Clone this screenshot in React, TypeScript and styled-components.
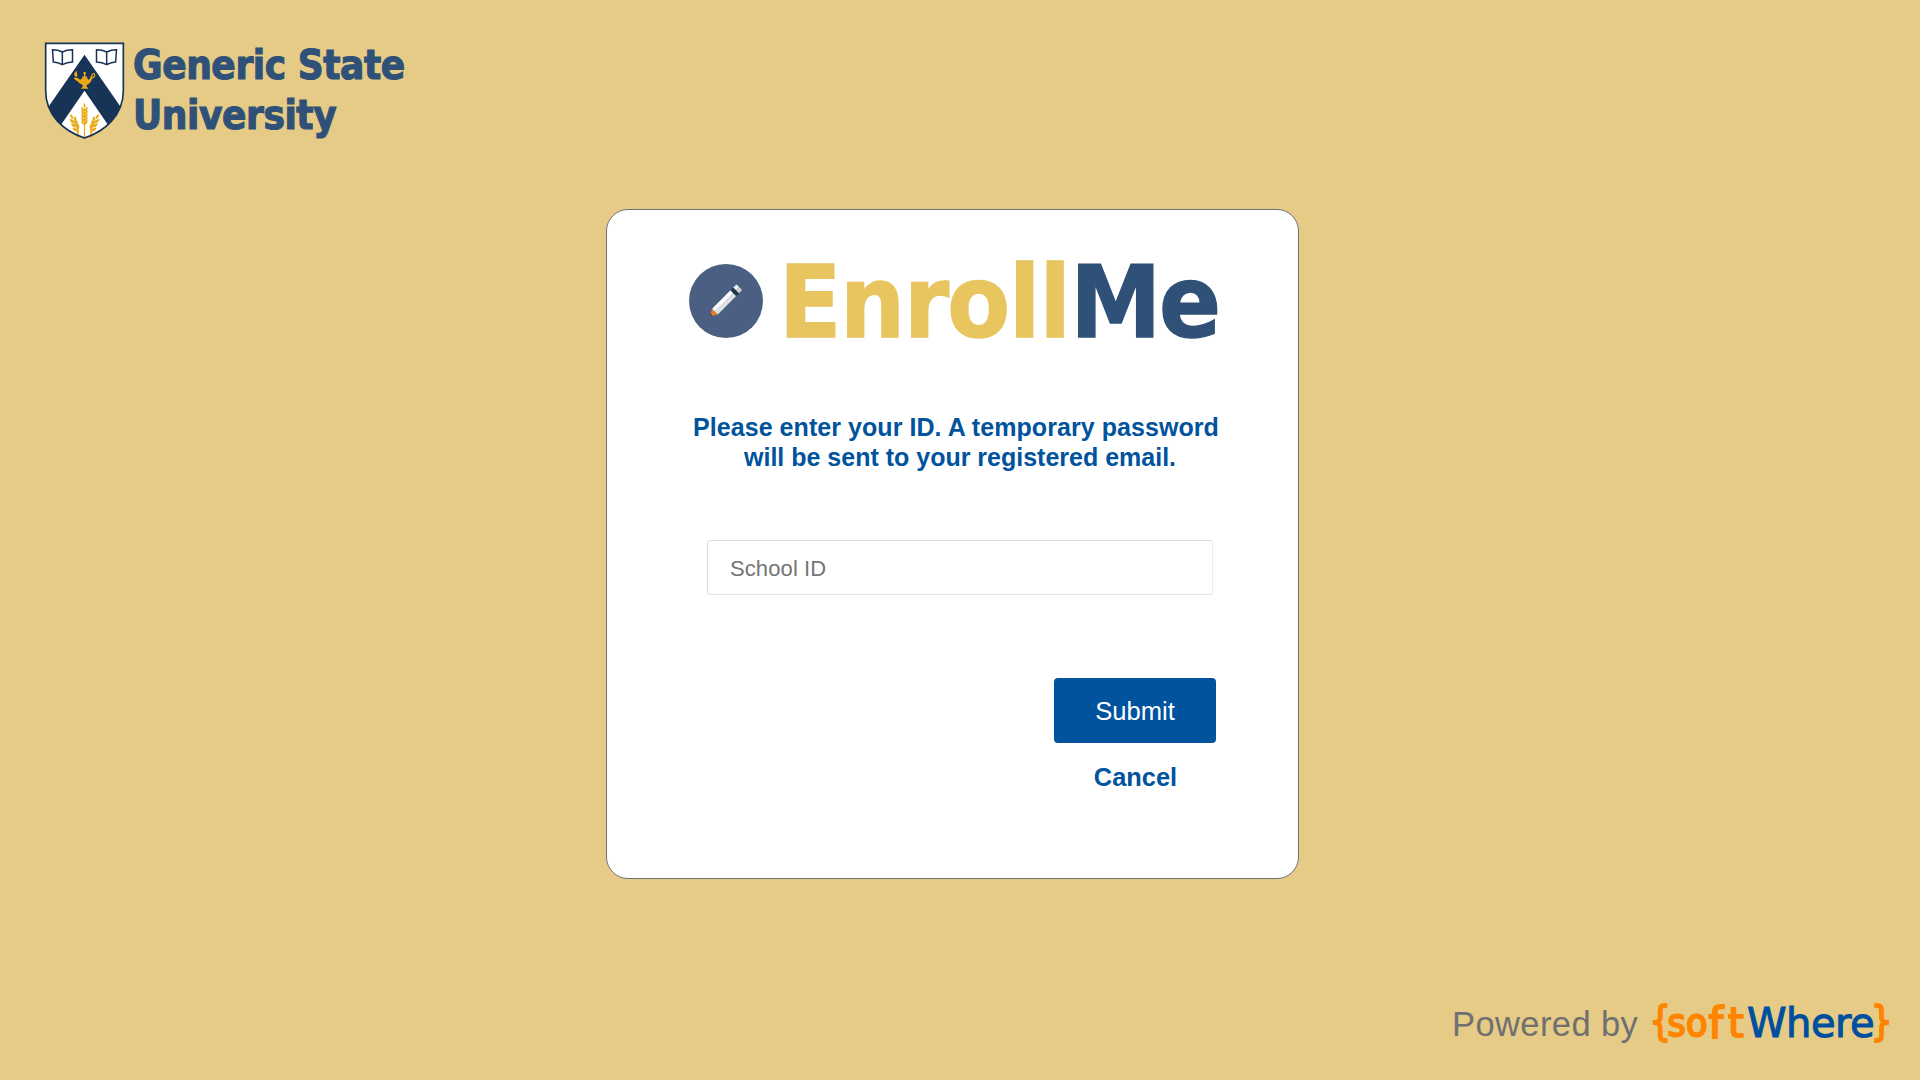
import React from "react";
import styled, { createGlobalStyle } from "styled-components";

const GlobalStyle = createGlobalStyle`
  * { box-sizing: border-box; }
  body { margin: 0; background: #e5cb86; }
`;

const sans = `"Liberation Sans", Arial, sans-serif`;
const brand = `"DejaVu Sans", Verdana, sans-serif`;

const Page = styled.div`
  width: 1920px;
  height: 1080px;
  display: flex;
  flex-direction: column;
  background: #e5cb86;
  font-family: ${sans};
  overflow: hidden;
`;

const Header = styled.header`
  display: flex;
  align-items: flex-start;
  height: 209px;
  padding: 30px 0 0 30px;
`;

const Crest = styled.svg`
  width: 103px;
  height: 120px;
  flex: none;
`;

const UniversityName = styled.h1`
  margin: 10px 0 0;
  font: bold 40px/50px ${brand};
  font-stretch: condensed;
  letter-spacing: -0.4px;
  -webkit-text-stroke: 1.1px #2f5178;
  color: #2f5178;
  white-space: nowrap;
`;

const Card = styled.main`
  width: 693px;
  height: 670px;
  margin-left: 606px;
  display: flex;
  flex-direction: column;
  background: #fff;
  border: 1px solid #707276;
  border-radius: 22px;
`;

const AppBrand = styled.div`
  display: flex;
  align-items: flex-start;
  height: 202px;
  padding: 28px 0 0 81px;
`;

const PencilBadge = styled.svg`
  width: 76px;
  height: 76px;
  margin-top: 25px;
  flex: none;
`;

const Wordmark = styled.svg`
  width: 460px;
  height: 126px;
  margin-left: 6px;
  flex: none;
  font: bold 100.5px ${brand};
`;

const Message = styled.p`
  margin: 0;
  padding-left: 86px;
  height: 128px;
  display: flex;
  flex-direction: column;
  font-size: 25px;
  font-weight: bold;
  line-height: 30px;
  color: #00539c;
  white-space: nowrap;
`;

const Line = styled.span<{ $indent: number; $spacing: number }>`
  padding-left: ${(p) => p.$indent}px;
  letter-spacing: ${(p) => p.$spacing}px;
`;

const IdInput = styled.input`
  width: 506px;
  height: 55px;
  margin-left: 100px;
  padding: 2px 22px 0;
  flex: none;
  font: 22px ${sans};
  letter-spacing: 0.1px;
  border: 1px solid #dcdcdc;
  border-right-color: #ececec;
  border-bottom-color: #e4e4e4;
  border-radius: 4px 2px 2px 4px;
  outline: none;
  &::placeholder { color: #757575; opacity: 1; }
`;

const Actions = styled.div`
  width: 162px;
  margin: 83px 0 0 447px;
  display: flex;
  flex-direction: column;
  align-items: center;
  gap: 18px;
`;

const SubmitButton = styled.button`
  width: 162px;
  height: 65px;
  padding: 2px 0 0;
  border: 0;
  border-radius: 4px;
  background: #00539c;
  color: #fff;
  font: 25.6px ${sans};
`;

const CancelLink = styled.a`
  padding-left: 1px;
  color: #00539c;
  font-weight: bold;
  font-size: 25.4px;
  line-height: 32px;
`;

const Footer = styled.footer`
  flex: 1;
  display: flex;
  justify-content: flex-end;
  align-items: flex-start;
  padding: 111px 25px 0 0;
`;

const PoweredBy = styled.span`
  width: 189px;
  margin: 14px 8px 0 0;
  font-size: 34.5px;
  line-height: 40px;
  letter-spacing: 0.4px;
  color: #707070;
  white-space: nowrap;
`;

const VendorLogo = styled.svg`
  width: 246px;
  height: 70px;
  flex: none;
  font-family: ${brand};
`;

function UniversityCrest() {
  const grain = [0, 1, 2, 3, 4];
  const stalk = (x: number, y: number, height: number, angle: number) => (
    <g transform={`translate(${x} ${y}) rotate(${angle})`} fill="#eaaa16">
      <path d={`M-1.8 12h3.6V${height}h-3.6Z`} />
      <path d="M0-6Q6 3 0 11Q-6 3 0-6Z" />
      {grain.map((i) => (
        <path
          key={i}
          d={`M-1 ${20 + i * 10}Q-11 ${18 + i * 10}-9 ${6 + i * 10}Q-1 ${9 + i * 10}-1 ${20 + i * 10}ZM1 ${20 + i * 10}Q11 ${18 + i * 10} 9 ${6 + i * 10}Q1 ${9 + i * 10} 1 ${20 + i * 10}Z`}
        />
      ))}
    </g>
  );
  const sideStalk = (
    <g fill="#eaaa16" stroke="#eaaa16" strokeWidth="0.8">
      <path d="M141 322V299Q139 288 132 275L136 273Q146 289 146 300V322Z" />
      <path d="M120 253Q131 257 130 267Q120 264 120 253Z" />
      <path d="M119 268Q130 266 134 279Q122 280 119 268ZM134 276Q129 266 136 259Q142 267 134 276Z" />
      <path d="M124 281Q135 279 139 291Q127 293 124 281ZM139 288Q133 277 140 270Q147 279 139 288Z" />
      <path d="M128 294Q139 291 143 304Q131 305 128 294ZM144 300Q138 289 145 282Q151 291 144 300Z" />
    </g>
  );
  const book = (
    <path
      d="M67.500 59Q84 59 97 66Q110 59 127.500 59V96Q111 97 97 104Q83 97 70 96ZM97 66V104"
      fill="none"
      stroke="#173457"
      strokeWidth="4.5"
    />
  );
  return (
    <Crest viewBox="0 0 309 360" aria-label="University crest">
      <defs>
        <clipPath id="shield">
          <path d="M47 40H280V182C280 255 226 303 163.500 324C101 303 47 255 47 182Z" />
        </clipPath>
      </defs>
      <path d="M47 40H280V182C280 255 226 303 163.500 324C101 303 47 255 47 182Z" fill="#fff" />
      <g clipPath="url(#shield)">
        <path d="M163.500 74L290 257L240 293L163.500 182L87 293L37 257Z" fill="#173457" />
      </g>
      {book}
      <g transform="translate(327 0) scale(-1 1)">{book}</g>
      <g fill="#eaaa16">
        <path d="M131 144Q142 140 150 149Q164 142 177 149Q181 145 183 138Q185 129 191 128Q197 130 196 138Q194 144 186 146Q182 160 170 165V170L176 176H152L158 170V165Q147 161 142 153Q136 152 131 144Z" />
        <path d="M154 146Q156 140 162 138V133A4 4 0 1 1 166 133V138Q172 140 174 146Z" />
        <path d="M139 141Q129 137 134 128L141 122Q140 129 142 133Q143 138 139 141Z" />
      </g>
      <path d="M186 141Q187 133 191 132Q193 134 192 138Q190 141 186 141Z" fill="#173457" />
      {stalk(163.5, 224, 98, 0)}
      {sideStalk}
      <g transform="translate(327 0) scale(-1 1)">{sideStalk}</g>
      <path d="M47 40H280V182C280 255 226 303 163.500 324C101 303 47 255 47 182Z" fill="none" stroke="#173457" strokeWidth="5" />
    </Crest>
  );
}

function Pencil() {
  return (
    <PencilBadge viewBox="0 0 76 76" aria-label="Pencil">
      <circle cx="38" cy="38" r="37" fill="#4b5f82" />
      <g transform="translate(22 53.500) rotate(-45)">
        <path d="M0 0L7-4V4Z" fill="#e67e22" />
        <path d="M0 0L2.500-1.600V1.600Z" fill="#34495e" />
        <path d="M7-4H33V0H7Z" fill="#fff" />
        <path d="M7 0H33V4H7Z" fill="#dfe2e3" />
        <path d="M33-4H37V4H33Z" fill="#20364a" />
        <path d="M37-4H40.500Q41.500-4 41.500-3V0H37Z" fill="#ecf0f1" />
        <path d="M37 0H41.500V3Q41.500 4 40.500 4H37Z" fill="#cdd1d3" />
      </g>
    </PencilBadge>
  );
}

const STRETCH = 0.91;
const spread = (...xs: number[]) => xs.map((x) => ((x - 770) / STRETCH).toFixed(2)).join(" ");

function EnrollMe() {
  return (
    <Wordmark viewBox="0 -12 460 126">
      <g transform={`scale(${STRETCH} 1)`} strokeWidth="1.4">
        <text y="86.500" x={spread(779, 840.1, 904.1, 947.3, 1009.1, 1039.4)} fill="#e8c55e" stroke="#e8c55e">Enroll</text>
        <text y="86.500" x={spread(1070.3, 1159.1)} fill="#2f5178" stroke="#2f5178">Me</text>
      </g>
    </Wordmark>
  );
}

function SoftWhereLogo() {
  return (
    <VendorLogo viewBox="1649 990 246 70">
      <g fill="#ff8400" stroke="#ff8400" strokeWidth="2" strokeLinejoin="round">
        <text transform="translate(1649.500 1034.500) scale(.82 1)" fontSize="41">{"{"}</text>
        <text y="1036" fontSize="40">
          <tspan x="1667.500" fontSize="39" fontStretch="condensed">s</tspan>
          <tspan x="1686" fontSize="39" fontStretch="condensed">o</tspan>
          <tspan x="1708.500" y="1038" fontSize="42">f</tspan>
          <tspan x="1728" y="1036.500" fontSize="40">t</tspan>
        </text>
        <text transform="translate(1871 1034.500) scale(.82 1)" fontSize="41">{"}"}</text>
      </g>
      <text x="1747" y="1036.500" fontSize="40" letterSpacing="-0.5" fill="#004f9f" stroke="#004f9f" strokeWidth="1">Where</text>
    </VendorLogo>
  );
}

export default function App() {
  return (
    <Page>
      <GlobalStyle />
      <Header>
        <UniversityCrest />
        <UniversityName>
          Generic State
          <br />
          University
        </UniversityName>
      </Header>
      <Card>
        <AppBrand>
          <Pencil />
          <EnrollMe />
        </AppBrand>
        <Message>
          <Line $indent={0} $spacing={0.06}>Please enter your ID. A temporary password</Line>
          <Line $indent={51} $spacing={0}>will be sent to your registered email.</Line>
        </Message>
        <IdInput placeholder="School ID" aria-label="School ID" />
        <Actions>
          <SubmitButton>Submit</SubmitButton>
          <CancelLink>Cancel</CancelLink>
        </Actions>
      </Card>
      <Footer>
        <PoweredBy>Powered by</PoweredBy>
        <SoftWhereLogo />
      </Footer>
    </Page>
  );
}
